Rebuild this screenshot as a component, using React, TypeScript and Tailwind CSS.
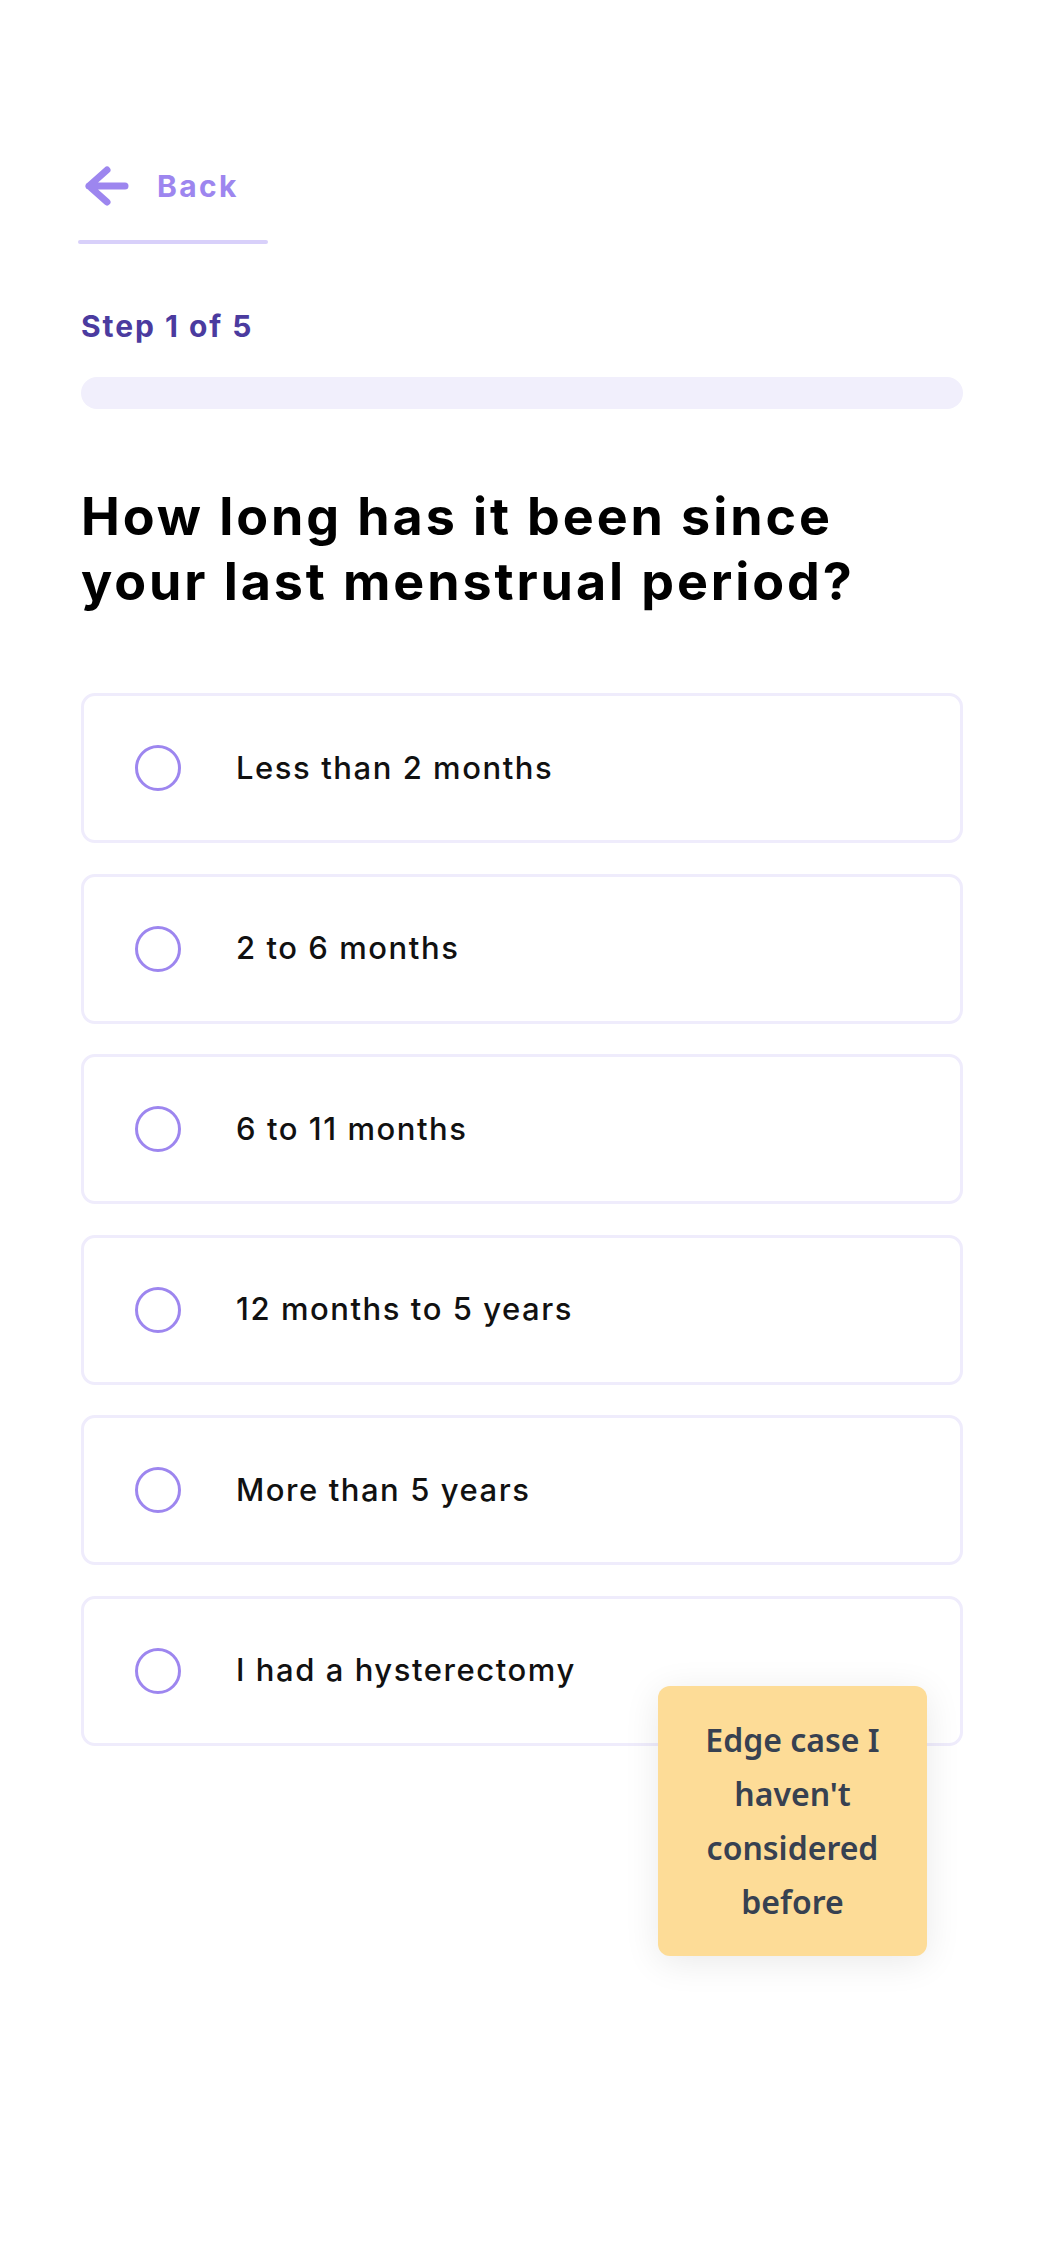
const options = [
  "Less than 2 months",
  "2 to 6 months",
  "6 to 11 months",
  "12 months to 5 years",
  "More than 5 years",
  "I had a hysterectomy",
];

function BackArrow() {
  return (
    <svg width="46" height="44" viewBox="0 0 46 44" fill="none" aria-hidden="true">
      <path
        d="M23 6 L5 22 L23 38 M5 22 H41"
        stroke="#9d86ef"
        strokeWidth="7"
        strokeLinecap="round"
        strokeLinejoin="round"
      />
    </svg>
  );
}

export default function App() {
  return (
    <div className="relative min-h-[2265px] w-full bg-white font-['Inter',sans-serif]">
      <div className="px-[81px] pt-[150px]">
        {/* back link */}
        <button type="button" className="-ml-[3px] flex w-[190px] flex-col">
          <span className="flex h-[72px] items-center gap-[27px] pl-[6px]">
            <BackArrow />
            <span className="text-[30px] font-bold tracking-[0.08em] text-[#9d86ef]">Back</span>
          </span>
          <span className="mt-[18px] block h-[4px] w-[190px] rounded-full bg-[#d8d0fa]" />
        </button>

        <p className="mt-[64px] text-[30px] leading-[36px] font-bold tracking-[0.065em] text-[#4b3b9f]">
          Step 1 of 5
        </p>

        <div className="mt-[33px] h-[32px] w-full rounded-full bg-[#f1effc]" />

        <h1 className="mt-[75px] text-[52px] leading-[65px] font-bold tracking-[0.056em] text-black">
          How long has it been since
          <br />
          your last menstrual period?
        </h1>

        <div className="mt-[79px] flex flex-col gap-[30.5px]">
          {options.map((opt) => (
            <label
              key={opt}
              className="flex h-[150px] items-center rounded-[14px] border-[3px] border-[#efecfc] bg-white pl-[51px]"
            >
              <span className="h-[46px] w-[46px] shrink-0 rounded-full border-[3px] border-[#9d86ef]" />
              <span className="ml-[55px] text-[31px] font-medium tracking-[0.05em] text-[#111]">{opt}</span>
            </label>
          ))}
        </div>
      </div>

      {/* sticky note */}
      <div className="absolute left-[658px] top-[1686px] flex h-[270px] w-[269px] items-center justify-center rounded-[12px] bg-[#fddc97] shadow-[0_6px_36px_rgba(0,0,0,0.09)]">
        <p className="text-center font-['Noto_Sans',sans-serif] text-[32px] leading-[54px] font-semibold text-[#374151]">
          Edge case I
          <br />
          haven't
          <br />
          considered
          <br />
          before
        </p>
      </div>
    </div>
  );
}
